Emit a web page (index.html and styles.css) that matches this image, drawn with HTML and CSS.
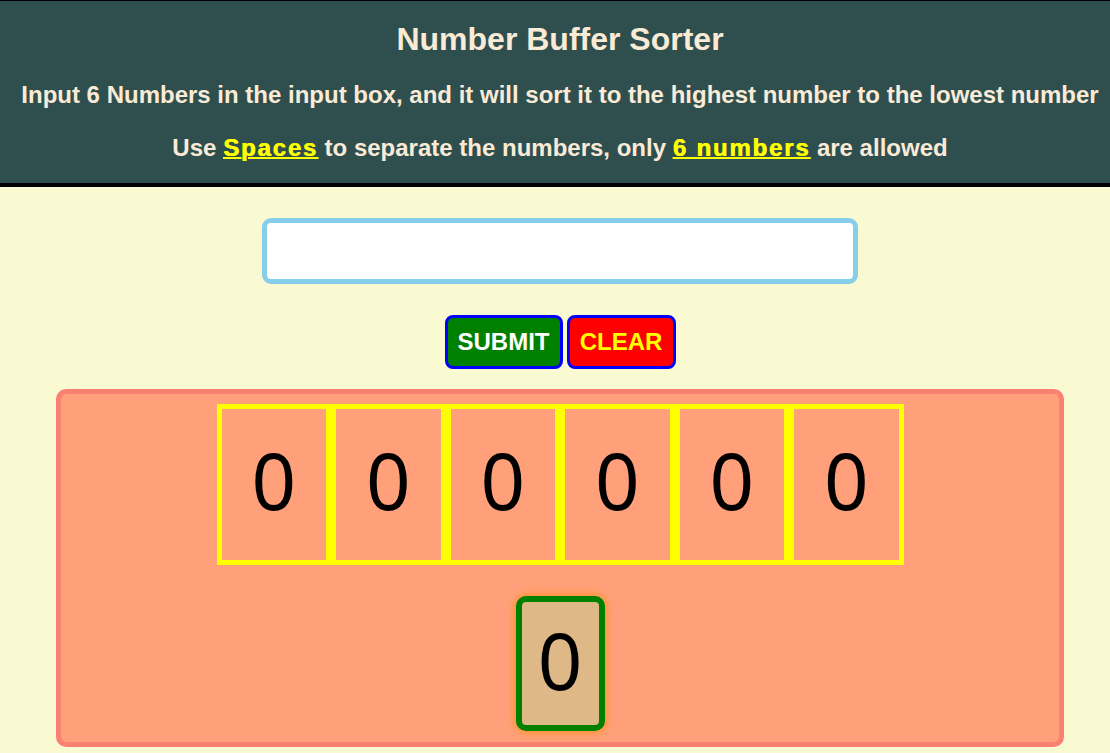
FILE: index.html
```html
<!DOCTYPE html>
<html lang="en">
<head>
<meta charset="utf-8">
<title>Number Buffer Sorter</title>
<link rel="stylesheet" href="styles.css">
</head>
<body>
<header class="hero">
  <h1 class="title">Number Buffer Sorter</h1>
  <h2 class="subtitle">Input 6 Numbers in the input box, and it will sort it to the highest number to the lowest number</h2>
  <h2 class="subtitle note">Use <u class="hl">Spaces</u> to separate the numbers, only <u class="hl">6 numbers</u> are allowed</h2>
</header>
<main class="main">
  <input class="num-input" type="text" aria-label="numbers">
  <div class="actions">
    <button class="btn btn-submit" type="button">SUBMIT</button>
    <button class="btn btn-clear" type="button">CLEAR</button>
  </div>
  <section class="panel">
    <div class="slots">
      <div class="slot">0</div>
      <div class="slot">0</div>
      <div class="slot">0</div>
      <div class="slot">0</div>
      <div class="slot">0</div>
      <div class="slot">0</div>
    </div>
    <div class="result">0</div>
  </section>
</main>
</body>
</html>
```
FILE: styles.css
```css
* { box-sizing: border-box; }

body {
  margin: 0;
  background: #fafad2;
  font-family: "Liberation Sans", Arial, sans-serif;
}

.hero {
  background: #2f4f4f;
  border-top: 1px solid #000;
  border-bottom: 4px solid #000;
  padding: 20px 0 21px 10px;
  text-align: center;
  color: #faebd7;
}

.title {
  margin: 0 0 23px;
  font-size: 32px;
  font-weight: bold;
}

.subtitle {
  margin: 0 0 25px;
  font-size: 24px;
  font-weight: bold;
}

.subtitle.note { margin-bottom: 0; }

.hl {
  color: #ffff00;
  letter-spacing: 1.8px;
  text-decoration: underline;
  text-decoration-thickness: 2px;
  text-shadow: 0.6px 0 0 #ffff00;
}

.main {
  padding: 31px 0 0 10px;
  display: flex;
  flex-direction: column;
  align-items: center;
}

.num-input {
  width: 596px;
  height: 66px;
  border: 5px solid #87ceeb;
  border-radius: 9px;
  background: #fff;
  outline: none;
  font-size: 24px;
  padding: 0 10px;
}

.actions {
  margin-top: 31px;
  display: flex;
  gap: 4px;
}

.btn {
  height: 54px;
  border: 3px solid #0000ff;
  border-radius: 8px;
  padding: 0 10px;
  font-family: "Liberation Sans", Arial, sans-serif;
  font-size: 24px;
  font-weight: bold;
}

.btn-submit { background: #008000; color: #fff; width: 118px; }
.btn-clear { background: #ff0000; color: #ffff00; width: 109px; }

.panel {
  margin-top: 20px;
  width: 1008px;
  background: #ffa07a;
  border: 5px solid #fa8072;
  border-radius: 10px;
  padding: 10px 0 11px;
  display: flex;
  flex-direction: column;
  align-items: center;
}

.slots {
  display: flex;
}

.slot {
  width: 114.5px;
  height: 161px;
  border: 5px solid #ffff00;
  padding-bottom: 10px;
  display: flex;
  align-items: center;
  justify-content: center;
  font-family: "Noto Sans", sans-serif;
  font-size: 78px;
  color: #000;
}

.result {
  margin-top: 31px;
  width: 89px;
  height: 135px;
  border: 6px solid #008000;
  border-radius: 10px;
  padding-bottom: 8px;
  background: #deb887;
  box-shadow: 0 0 10px #ff8c00;
  display: flex;
  align-items: center;
  justify-content: center;
  font-family: "Noto Sans", sans-serif;
  font-size: 78px;
  color: #000;
}
```
